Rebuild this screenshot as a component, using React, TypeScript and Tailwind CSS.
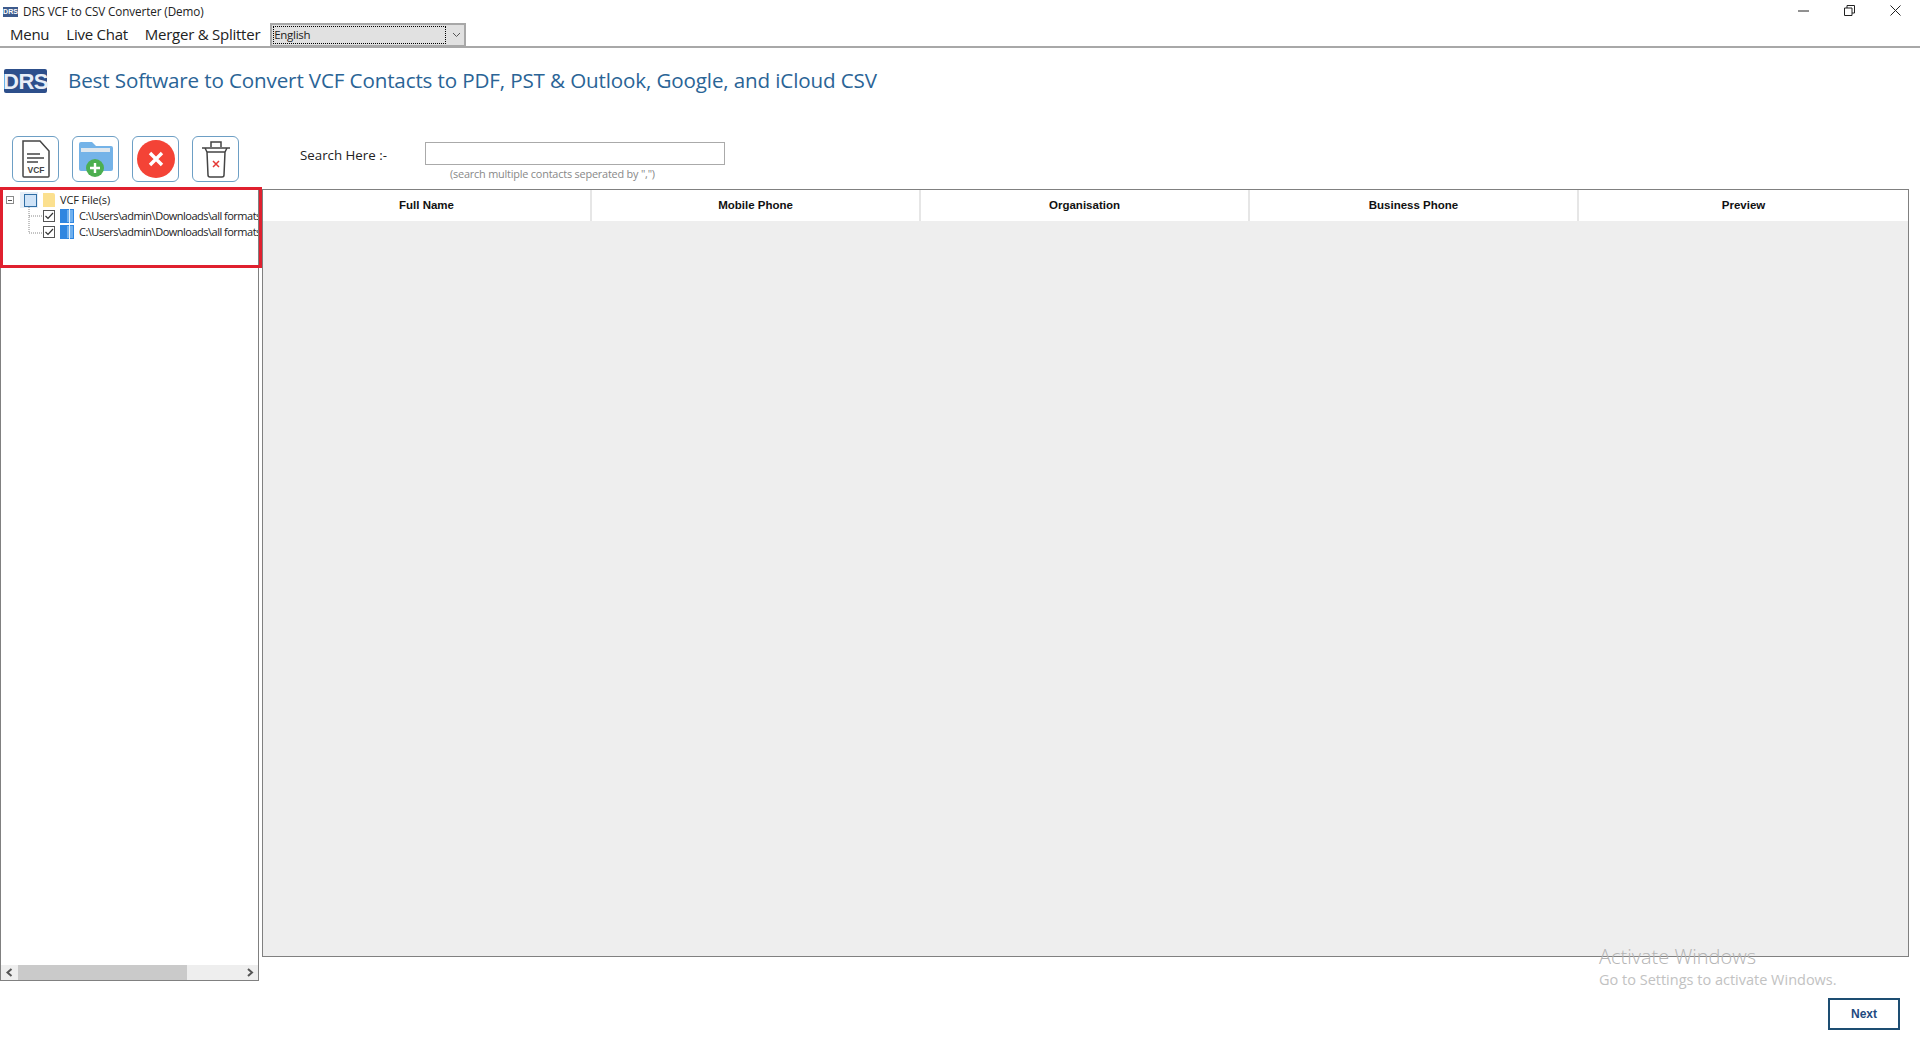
const columns = ["Full Name", "Mobile Phone", "Organisation", "Business Phone", "Preview"];
const menus = ["Menu", "Live Chat", "Merger & Splitter"];

const ui = "font-['Open_Sans','Noto_Sans',sans-serif]";

function DrsLogo() {
  return (
    <div className="flex h-[24px] w-[43px] items-center justify-center rounded-[2px] bg-[#2d4f8b] font-['Liberation_Sans',sans-serif] text-[22px] font-bold tracking-[-0.5px] text-[#e8eef7]">
      DRS
    </div>
  );
}

function ToolButton({ children }: { children: React.ReactNode }) {
  return (
    <button className="flex h-[46px] w-[47px] items-center justify-center rounded-[6px] border border-[#6d9fc5] bg-white">
      {children}
    </button>
  );
}

function VcfIcon() {
  return (
    <svg width="30" height="38" viewBox="0 0 30 38" fill="none" stroke="#444" strokeWidth="1.5">
      <path d="M2 1h17l9 10v25a1 1 0 0 1-1 1H3a1 1 0 0 1-1-1z" />
      <path d="M6 14h13M6 18h17M6 22h11" />
      <text x="15" y="33" textAnchor="middle" fontSize="8.5" fontWeight="700" fill="#444" stroke="none" fontFamily="Liberation Sans, sans-serif">VCF</text>
    </svg>
  );
}

function FolderAddIcon() {
  return (
    <svg width="36" height="38" viewBox="0 0 36 38">
      <path d="M1 4a2 2 0 0 1 2-2h11l4 4h15a2 2 0 0 1 2 2v21a2 2 0 0 1-2 2H3a2 2 0 0 1-2-2z" fill="#74b3e8" />
      <path d="M3 8h29v4H3z" fill="#dfe7ee" />
      <circle cx="17" cy="28" r="9" fill="#4caf50" />
      <path d="M17 23v10M12 28h10" stroke="#fff" strokeWidth="2.4" />
    </svg>
  );
}

function CancelIcon() {
  return (
    <svg width="38" height="38" viewBox="0 0 38 38">
      <circle cx="19" cy="19" r="19" fill="#f44336" />
      <path d="M13 13l12 12M25 13L13 25" stroke="#fff" strokeWidth="3.4" />
    </svg>
  );
}

function TrashIcon() {
  return (
    <svg width="30" height="40" viewBox="0 0 30 40" fill="none" stroke="#444" strokeWidth="1.5">
      <path d="M1 9h28M10 8V3h10v5M4 9l2 4h18l2-4M6 13l1 23a2 2 0 0 0 2 2h12a2 2 0 0 0 2-2l1-23" />
      <path d="M12 22l6 6M18 22l-6 6" stroke="#e53935" />
    </svg>
  );
}

function TreeCheck() {
  return (
    <svg width="12" height="12" viewBox="0 0 12 12" fill="none" className="shrink-0">
      <rect x="0.5" y="0.5" width="11" height="11" fill="#fff" stroke="#555" />
      <path d="M2.5 6l2.5 2.5L10 3" stroke="#333" strokeWidth="1.2" />
    </svg>
  );
}

function FileIcon() {
  return (
    <svg width="14" height="14" viewBox="0 0 14 14" className="shrink-0">
      <path d="M0 0h14v14H0z" fill="#2f86e0" />
      <path d="M7 1h6v12H7z" fill="#6fb0ee" />
      <path d="M9 0h1v14H9z" fill="#e6f1fb" />
    </svg>
  );
}

function TreePanel() {
  const path = "C:\\Users\\admin\\Downloads\\all formats\\contacts.vcf";
  return (
    <div className="flex h-[793px] w-[259px] flex-col border border-[#808080] bg-white">
      <div className="relative flex-1 overflow-hidden pl-[5px] pt-[3px] font-['Open_Sans',sans-serif] text-[11px] text-[#222]">
        <div className="flex h-[16px] items-center">
          <div className="flex h-[8px] w-[8px] items-center justify-center border border-[#8a8a8a]">
            <div className="h-px w-[4px] bg-[#555]" />
          </div>
          <div className="ml-[6px] flex h-[16px] w-[18px] items-center justify-center bg-[#e4eef8]">
            <div className="ml-[2px] h-[13px] w-[13px] border border-[#2f6ea5] bg-[#cfe3f7]" />
          </div>
          <div className="ml-[5px] h-[14px] w-[12px] rounded-tr-[2px] bg-[#fbe08f]" />
          <span className="ml-[5px] whitespace-nowrap tracking-[-0.1px]">VCF File(s)</span>
        </div>
        {[0, 1].map((i) => (
          <div key={i} className="flex h-[16px] items-center whitespace-nowrap pl-[37px]">
            <TreeCheck />
            <div className="ml-[5px]">
              <FileIcon />
            </div>
            <span className="ml-[5px] tracking-[-0.5px]">{path}</span>
          </div>
        ))}
        <svg className="absolute left-[27px] top-[18px]" width="14" height="28" fill="none" stroke="#888" strokeDasharray="1 1">
          <path d="M1 0v26M1 9h13M1 26h13" />
        </svg>
      </div>
      <div className="flex h-[15px] shrink-0 items-center bg-[#eeeeee]">
        <svg width="17" height="15" viewBox="0 0 16 15" fill="none" stroke="#555" strokeWidth="2" className="shrink-0">
          <path d="M10 4L6 7.5l4 3.5" />
        </svg>
        <div className="h-[15px] w-[169px] bg-[#cacaca]" />
        <div className="flex-1" />
        <svg width="16" height="15" viewBox="0 0 16 15" fill="none" stroke="#555" strokeWidth="2" className="shrink-0">
          <path d="M6 4l4 3.5L6 11" />
        </svg>
      </div>
    </div>
  );
}

export default function App() {
  return (
    <div className="relative flex h-[1040px] w-[1920px] flex-col overflow-hidden bg-white">
      {/* title bar */}
      <div className={`flex h-[23px] shrink-0 items-center pl-[3px] text-[11.7px] text-[#222] ${ui}`}>
        <div className="flex h-[10px] w-[15px] items-center justify-center bg-[#3c5a8c] font-['Liberation_Sans',sans-serif] text-[7px] font-bold leading-none text-white">
          DRS
        </div>
        <span className="ml-[5px] tracking-[-0.1px]">DRS VCF to CSV Converter (Demo)</span>
        <div className="ml-auto mb-[2px] flex items-center gap-[35px] pr-[19px]">
          <svg width="11" height="2" viewBox="0 0 11 2">
            <path d="M0 1h11" stroke="#222" strokeWidth="1" />
          </svg>
          <svg width="11" height="11" viewBox="0 0 11 11" fill="none" stroke="#222">
            <path d="M.5 3h7.5v7.5H.5zM3 3V.5h7.5V8H8" />
          </svg>
          <svg width="11" height="11" viewBox="0 0 11 11" fill="none" stroke="#222">
            <path d="M.5.5l10 10M10.5.5l-10 10" />
          </svg>
        </div>
      </div>

      {/* menu row */}
      <div className={`flex h-[25px] shrink-0 items-center border-b-2 border-[#a8a8a8] pl-[10px] text-[15px] text-[#222] ${ui}`}>
        <div className="flex gap-[17px]">
          {menus.map((m) => (
            <span key={m} className="whitespace-nowrap tracking-[-0.25px]">
              {m}
            </span>
          ))}
        </div>
        <div className="ml-[10px] flex h-[24px] w-[196px] items-center border-2 border-[#a8a8a8] bg-[#e1e1e1] p-px">
          <div className="flex h-full flex-1 items-center border border-dotted border-black text-[11.5px] tracking-[-0.3px]">
            English
          </div>
          <svg width="17" height="10" viewBox="0 0 17 10" fill="none" stroke="#555" className="shrink-0">
            <path d="M7 3l3.5 3.5L14 3" />
          </svg>
        </div>
      </div>

      {/* heading */}
      <div className="flex h-[57px] shrink-0 items-center pl-[4px] pt-[9px]">
        <DrsLogo />
        <h1 className={`ml-[21px] mb-[2px] whitespace-nowrap text-[20.6px] tracking-[-0.13px] text-[#2a6496] ${ui}`}>
          Best Software to Convert VCF Contacts to PDF, PST & Outlook, Google, and iCloud CSV
        </h1>
      </div>

      {/* toolbar and search */}
      <div className="flex h-[83px] shrink-0 pt-[31px]">
        <div className="flex gap-[13px] pl-[12px]">
          <ToolButton>
            <VcfIcon />
          </ToolButton>
          <ToolButton>
            <FolderAddIcon />
          </ToolButton>
          <ToolButton>
            <CancelIcon />
          </ToolButton>
          <ToolButton>
            <TrashIcon />
          </ToolButton>
        </div>
        <div className={`ml-[61px] flex items-start ${ui}`}>
          <span className="mt-[10px] w-[125px] whitespace-nowrap text-[13.3px] text-[#222]">Search Here :-</span>
          <div className="pt-[6px]">
            <input className="block h-[23px] w-[300px] border border-[#aaaaaa] bg-white" />
            <p className="ml-[25px] mt-px whitespace-nowrap text-[10.9px] tracking-[-0.2px] text-[#888]">
              (search multiple contacts seperated by ",")
            </p>
          </div>
        </div>
      </div>

      {/* main */}
      <div className="flex items-start">
        <TreePanel />
        <div className="ml-[3px] mt-px flex h-[768px] w-[1647px] flex-col border border-[#808080] bg-[#eeeeee]">
          <div className="grid h-[31px] shrink-0 grid-cols-5 bg-white">
            {columns.map((c) => (
              <div
                key={c}
                className="flex items-center justify-center border-r-2 border-[#e6e6e6] font-['Liberation_Sans',sans-serif] text-[11.5px] font-bold text-[#111] last:border-r-0"
              >
                {c}
              </div>
            ))}
          </div>
        </div>
      </div>

      {/* footer */}
      <div className="flex justify-end pr-[20px] pt-[17px]">
        <button className="h-[32px] w-[72px] border-2 border-[#1d4d72] bg-white font-['Liberation_Sans',sans-serif] text-[12px] font-bold text-[#1e4a80]">
          Next
        </button>
      </div>

      {/* windows watermark over the page */}
      <div className="pointer-events-none absolute left-[1599px] top-[944px] font-['Open_Sans',sans-serif] text-[#b4b4b4]">
        <div className="text-[20px] font-light leading-[26px]">Activate Windows</div>
        <div className="text-[14.5px] leading-[20px] text-[#c2c2c2]">Go to Settings to activate Windows.</div>
      </div>

      {/* red highlight round the tree */}
      <div className="pointer-events-none absolute left-0 top-[187px] h-[81px] w-[262px] border-[3px] border-[#e0202f]" />
    </div>
  );
}
